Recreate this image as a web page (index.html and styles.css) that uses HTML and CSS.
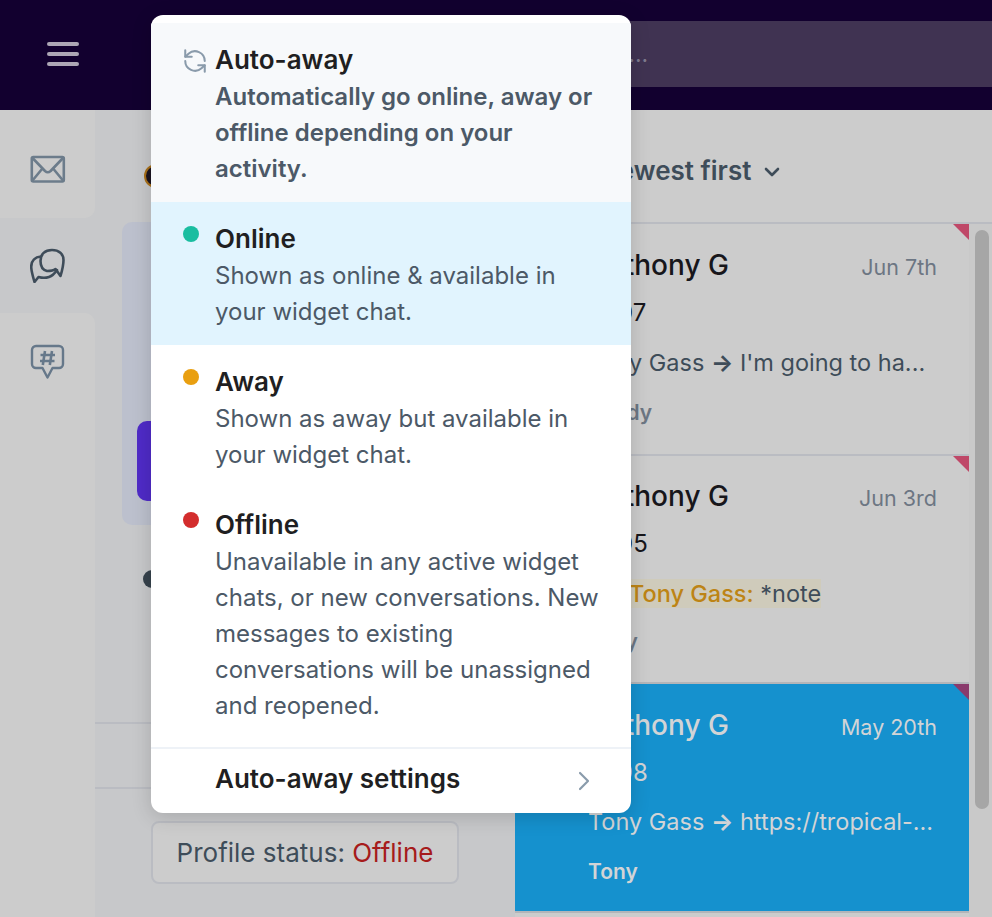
FILE: index.html

```html
<!DOCTYPE html>
<html lang="en">
<head>
    <meta charset="UTF-8">
    <title>Conversations</title>
    <link rel="stylesheet" href="styles.css">
</head>
<body>
    <header class="topbar">
        <button class="burger"><span></span><span></span><span></span></button>
        <div class="search">Search...</div>
    </header>

    <div class="app">
        <nav class="sidebar">
            <a class="nav-item nav-first">
                <svg width="36" height="30" viewBox="0 0 36 30" fill="none" stroke="#6c7c8b" stroke-width="2.600" stroke-linejoin="round">
                    <rect x="1.800" y="2" width="32" height="24.500" rx="1.500"/>
                    <path d="M2.500 3l12.500 13q2.800 2.500 5.600 0L33 3M2.500 25.500l9.500-11.500M33 25.500L23.500 14"/>
                </svg>
            </a>
            <a class="nav-item nav-active">
                <svg width="36" height="36" viewBox="0 0 36 36" fill="none" stroke="#3e4c59" stroke-width="2.600" stroke-linejoin="round" stroke-linecap="round">
                    <path d="M10.500 14C10.500 7 15 3 22 3c7 0 11.500 4 11.500 10 0 5-1.500 11-3 16l-5-7c-2.500 2-5.500 2-8.500 2-4-1-6.500-5-6.500-10z"/>
                    <path d="M11 9.500C5 10 1.200 14 1.200 20c.3 5 1.800 10 3.300 15l4-5c3.500 1 7.500 1 10.500 0 3-1 6-4 8-7"/>
                </svg>
            </a>
            <a class="nav-item nav-last">
                <svg width="36" height="36" viewBox="0 0 36 36" fill="none" stroke="#66788a" stroke-width="2.400" stroke-linejoin="round">
                    <path d="M6 2h23a4 4 0 0 1 4 4v14a4 4 0 0 1-4 4h-6.500l-5 9.500-5-9.500H6a4 4 0 0 1-4-4V6a4 4 0 0 1 4-4z"/>
                    <path d="M15 7l-2.200 14M22 7l-2.200 14M10.500 11h14.500M10 17h14.500" stroke-width="2.600"/>
                </svg>
            </a>
        </nav>

        <main class="main">
            <div class="main-head"><span class="black-dot"></span></div>
            <div class="intro-card"><div class="purple-btn"></div></div>
            <div class="status-row"><span class="dark-dot"></span></div>
            <div class="rule-box"></div>
            <div class="profile-btn">Profile status: <span class="off">Offline</span></div>
        </main>

        <section class="convos">
            <div class="sort">Newest first
                <svg width="16" height="10" viewBox="0 0 16 10" fill="none" stroke="#3e4c59" stroke-width="2.600" stroke-linecap="round" stroke-linejoin="round"><path d="M2 2l6 6 6-6"/></svg>
            </div>
            <div class="convo-scroll">
                <div class="convo-list">
                    <article class="convo">
                        <i class="corner"></i>
                        <div class="convo-top"><span class="name">Anthony G</span><span class="date">Jun 7th</span></div>
                        <div class="num">#907</div>
                        <div class="preview">Tony Gass <span class="arrow">→</span> I'm going to ha...</div>
                        <div class="who">Randy</div>
                    </article>
                    <article class="convo convo-mid">
                        <i class="corner"></i>
                        <div class="convo-top"><span class="name">Anthony G</span><span class="date">Jun 3rd</span></div>
                        <div class="num">#905</div>
                        <div class="preview"><span class="note"><b>Tony Gass:</b> *note</span></div>
                        <div class="who">Tony</div>
                    </article>
                    <article class="convo convo-selected">
                        <i class="corner"></i>
                        <div class="convo-top"><span class="name">Anthony G</span><span class="date">May 20th</span></div>
                        <div class="num">#898</div>
                        <div class="preview">Tony Gass <span class="arrow">→</span> https://tropical-...</div>
                        <div class="who">Tony</div>
                    </article>
                </div>
                <div class="scrolltrack"><div class="thumb"></div></div>
            </div>
        </section>
    </div>

    <div class="status-menu">
        <div class="opt opt-auto">
            <svg class="opt-icon" width="26" height="26" viewBox="0 0 24 24" fill="none" stroke="#8a9bab" stroke-width="1.900" stroke-linecap="round" stroke-linejoin="round">
                <path d="M3 2v6h6"/>
                <path d="M21 12A9 9 0 0 0 6 5.300L3 8"/>
                <path d="M21 22v-6h-6"/>
                <path d="M3 12a9 9 0 0 0 15 6.700l3-2.700"/>
            </svg>
            <div>
                <h4>Auto-away</h4>
                <p>Automatically go online, away or offline depending on your activity.</p>
            </div>
        </div>
        <div class="opt opt-online">
            <span class="dot green"></span>
            <div>
                <h4>Online</h4>
                <p>Shown as online &amp; available in your widget chat.</p>
            </div>
        </div>
        <div class="opt">
            <span class="dot amber"></span>
            <div>
                <h4>Away</h4>
                <p>Shown as away but available in your widget chat.</p>
            </div>
        </div>
        <div class="opt">
            <span class="dot red"></span>
            <div>
                <h4>Offline</h4>
                <p>Unavailable in any active widget chats, or new conversations. New messages to existing conversations will be unassigned and reopened.</p>
            </div>
        </div>
        <div class="menu-foot">
            <span>Auto-away settings</span>
            <svg width="12" height="20" viewBox="0 0 12 20" fill="none" stroke="#8a9bab" stroke-width="2.200" stroke-linecap="round" stroke-linejoin="round"><path d="M2 2l8 8-8 8"/></svg>
        </div>
    </div>
</body>
</html>
```

FILE: styles.css

```css
* {
    box-sizing: border-box;
}
body {
    margin: 0;
    height: 917px;
    overflow: hidden;
    font-family: Inter, "Noto Sans", sans-serif;
    font-size: 24px;
    background: #c7c8ca;
    color: #1f2933;
}
h4, p {
    margin: 0;
}

/* top bar */
.topbar {
    height: 110px;
    background: #12002f;
    display: flex;
    align-items: center;
}
.burger {
    width: 95px;
    padding: 0 0 0 47px;
    margin-top: -2px;
    background: none;
    border: none;
    display: flex;
    flex-direction: column;
    gap: 6px;
}
.burger span {
    display: block;
    width: 32px;
    height: 4px;
    border-radius: 2px;
    background: #ada6b5;
}
.search {
    flex: 1;
    height: 66px;
    margin: -2px 0 0 455px;
    padding-left: 2px;
    background: #403352;
    color: #7e7a8d;
    font-size: 23px;
    line-height: 66px;
    white-space: nowrap;
}

.app {
    display: flex;
    height: 807px;
}

/* left nav */
.sidebar {
    width: 95px;
    display: flex;
    flex-direction: column;
    flex-shrink: 0;
}
.nav-item {
    display: flex;
    justify-content: center;
    padding-top: 45px;
    height: 95px;
}
.nav-first {
    height: 108px;
    background: #cccccc;
    border-bottom-right-radius: 10px;
}
.nav-active {
    padding-top: 29px;
}
.nav-last {
    flex: 1;
    padding-top: 31px;
    background: #cccccc;
    border-top-right-radius: 10px;
}

/* middle column */
.main {
    width: 420px;
    flex-shrink: 0;
}
.main-head {
    height: 112px;
    padding: 54px 0 0 49px;
}
.black-dot {
    display: block;
    width: 24px;
    height: 24px;
    border-radius: 50%;
    background: #1b1420;
    border: 2px solid #a8701a;
}
.intro-card {
    margin-left: 27px;
    height: 303px;
    padding: 199px 0 0 15px;
    background: #bcc0cd;
    border-radius: 10px;
}
.purple-btn {
    width: 60px;
    height: 80px;
    background: #4f2bc7;
    border-radius: 10px;
}
.status-row {
    height: 199px;
    padding: 45px 0 0 48px;
    border-bottom: 2px solid #babcc2;
}
.dark-dot {
    display: block;
    width: 18px;
    height: 18px;
    border-radius: 50%;
    background: #36424c;
}
.rule-box {
    height: 65px;
    border-bottom: 2px solid #babcc2;
}
.profile-btn {
    width: 308px;
    height: 63px;
    margin: 32px 0 0 56px;
    border: 2px solid #babcc2;
    border-radius: 8px;
    background: #cccccc;
    line-height: 60px;
    text-align: center;
    font-size: 26px;
    color: #3e4c59;
    white-space: nowrap;
}
.off {
    color: #a61b1b;
}

/* conversation list */
.convos {
    flex: 1;
    min-width: 0;
    background: #cccccc;
}
.sort {
    height: 112px;
    padding: 45px 0 0 84px;
    font-size: 26px;
    font-weight: 600;
    color: #3e4c59;
    white-space: nowrap;
}
.sort svg {
    margin: 0 0 3px 6px;
}
.convo-scroll {
    display: flex;
    border-top: 2px solid #babcc2;
}
.convo-list {
    width: 454px;
    flex-shrink: 0;
}
.convo {
    position: relative;
    height: 230px;
    padding: 24px 32px 0 73px;
}
.convo-mid {
    height: 228px;
    padding-top: 23px;
    border-top: 2px solid #babcc2;
}
.convo-selected {
    height: 231px;
    background: #1591ce;
    border-top: 2px solid #b3b5b9;
    border-bottom: 2px solid #b3b5b9;
}
.convo-top {
    display: flex;
    justify-content: space-between;
    align-items: baseline;
    line-height: 34px;
}
.name {
    font-size: 28px;
    font-weight: 500;
    color: #17161b;
}
.date {
    font-size: 21.500px;
    color: #6c7683;
}
.num {
    margin-top: 13px;
    font-size: 24px;
    line-height: 32px;
    color: #17161b;
}
.preview {
    margin-top: 19px;
    font-size: 23.500px;
    line-height: 30px;
    color: #3e4c59;
    white-space: nowrap;
}
.convo-selected .preview {
    margin-top: 18px;
}
.arrow {
    font-weight: 700;
}
.note {
    display: inline-block;
    height: 29px;
    margin-left: 26px;
    padding-left: 15px;
    background: #cfcbbb;
    line-height: 30px;
}
.note b {
    font-weight: 500;
    color: #bd8415;
}
.who {
    margin-top: 20px;
    font-size: 21px;
    font-weight: 600;
    line-height: 30px;
    color: #6c7683;
}
.convo-mid .who {
    margin-top: 18px;
}
.convo-selected .name,
.convo-selected .date,
.convo-selected .num,
.convo-selected .preview,
.convo-selected .who {
    color: #d2d4d6;
}
.corner {
    position: absolute;
    top: 0;
    right: 0;
    width: 0;
    height: 0;
    border-top: 16px solid #bf4868;
    border-left: 16px solid transparent;
}
.convo-selected .corner {
    border-top-color: #8a3a6c;
}
.scrolltrack {
    flex: 1;
    height: 700px;
    background: #c9c9c9;
    padding: 6px 3px 0 6px;
}
.thumb {
    height: 579px;
    border-radius: 7px;
    background: #a6a6a6;
}

/* status dropdown */
.status-menu {
    position: absolute;
    top: 15px;
    left: 151px;
    width: 480px;
    height: 798px;
    background: #fff;
    border-radius: 12px;
    overflow: hidden;
    box-shadow: 0 4px 20px rgba(0, 0, 0, 0.16);
}
.opt {
    display: flex;
    padding: 22px 26px 15px 32px;
}
.opt-icon {
    flex-shrink: 0;
    margin: 3px 7px 0 -1px;
}
.opt-auto {
    margin-top: 8px;
    background: #f7f9fb;
}
.opt-online {
    background: #e1f4fe;
}
.opt h4 {
    font-size: 26px;
    font-weight: 600;
    line-height: 30px;
    margin-bottom: 4px;
    color: #1f1f22;
}
.opt p {
    font-size: 24px;
    line-height: 36px;
    color: #4c5967;
}
.opt-auto p {
    font-weight: 600;
}
.dot {
    width: 16px;
    height: 16px;
    flex-shrink: 0;
    margin: 2px 16px 0 0;
    border-radius: 50%;
}
.green { background: #19bda0; }
.amber { background: #e99f10; }
.red { background: #d32d2d; }
.menu-foot {
    display: flex;
    justify-content: space-between;
    align-items: center;
    height: 60px;
    margin-top: 8px;
    padding: 0 41px 0 64px;
    border-top: 2px solid #eef2f7;
    font-size: 26px;
    font-weight: 600;
    color: #1f1f22;
}
.menu-foot svg {
    margin-top: 6px;
}
```
